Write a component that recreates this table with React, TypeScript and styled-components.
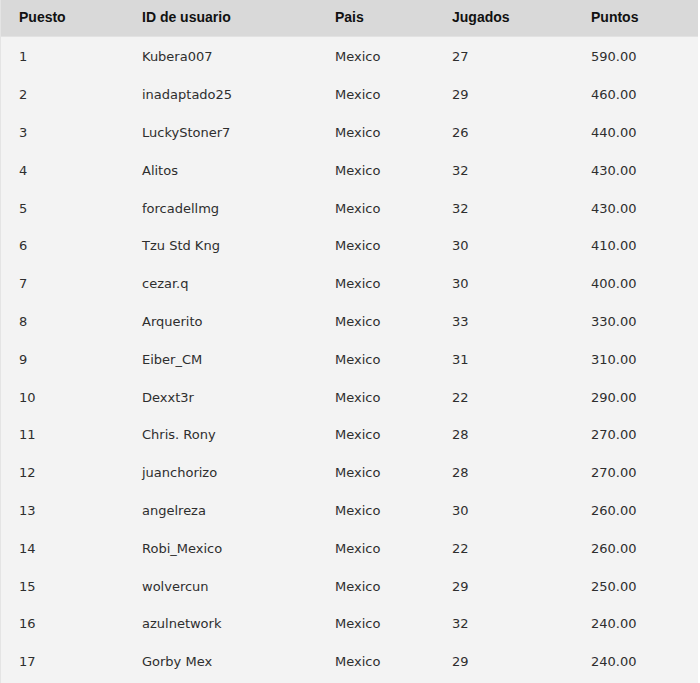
import React from "react";
import styled, { createGlobalStyle } from "styled-components";

const Global = createGlobalStyle`
  html, body { margin: 0; padding: 0; background: #ffffff; }
  body { font-family: "DejaVu Sans", Verdana, sans-serif; }
`;

const Table = styled.div`
  width: 698px;
  background: #f3f3f3;
  border-left: 1px solid #e4e4e4;
  box-sizing: border-box;
  padding-bottom: 12px;
`;

const cols = "123px 193px 117px 139px 1fr";

const HeaderRow = styled.div`
  display: grid;
  grid-template-columns: ${cols};
  height: 37px;
  align-items: center;
  background: #d9d9d9;
  border-bottom: 1px solid #e2e2e2;
  box-sizing: border-box;
`;

const HeadCell = styled.div`
  padding-left: 18px;
  font-family: "Liberation Sans", Arial, sans-serif;
  font-weight: bold;
  font-size: 14px;
  color: #111;
  padding-bottom: 2px;
`;

const Body = styled.div`
  display: grid;
  grid-auto-rows: 37.8px;
`;

const Row = styled.div`
  display: grid;
  grid-template-columns: ${cols};
  align-items: center;
`;

const Cell = styled.div`
  padding-left: 18px;
  padding-top: 2px;
  font-family: "DejaVu Sans", Verdana, sans-serif;
  font-size: 13px;
  color: #2e2e2e;
`;

const data: [string, string, string][] = [
  ["Kubera007", "27", "590.00"],
  ["inadaptado25", "29", "460.00"],
  ["LuckyStoner7", "26", "440.00"],
  ["Alitos", "32", "430.00"],
  ["forcadellmg", "32", "430.00"],
  ["Tzu Std Kng", "30", "410.00"],
  ["cezar.q", "30", "400.00"],
  ["Arquerito", "33", "330.00"],
  ["Eiber_CM", "31", "310.00"],
  ["Dexxt3r", "22", "290.00"],
  ["Chris. Rony", "28", "270.00"],
  ["juanchorizo", "28", "270.00"],
  ["angelreza", "30", "260.00"],
  ["Robi_Mexico", "22", "260.00"],
  ["wolvercun", "29", "250.00"],
  ["azulnetwork", "32", "240.00"],
  ["Gorby Mex", "29", "240.00"],
];

export default function App() {
  return (
    <>
      <Global />
      <Table>
        <HeaderRow>
          <HeadCell>Puesto</HeadCell>
          <HeadCell>ID de usuario</HeadCell>
          <HeadCell>Pais</HeadCell>
          <HeadCell>Jugados</HeadCell>
          <HeadCell>Puntos</HeadCell>
        </HeaderRow>
        <Body>
          {data.map(([id, played, pts], i) => (
            <Row key={i}>
              <Cell>{i + 1}</Cell>
              <Cell>{id}</Cell>
              <Cell>Mexico</Cell>
              <Cell>{played}</Cell>
              <Cell>{pts}</Cell>
            </Row>
          ))}
        </Body>
      </Table>
    </>
  );
}
